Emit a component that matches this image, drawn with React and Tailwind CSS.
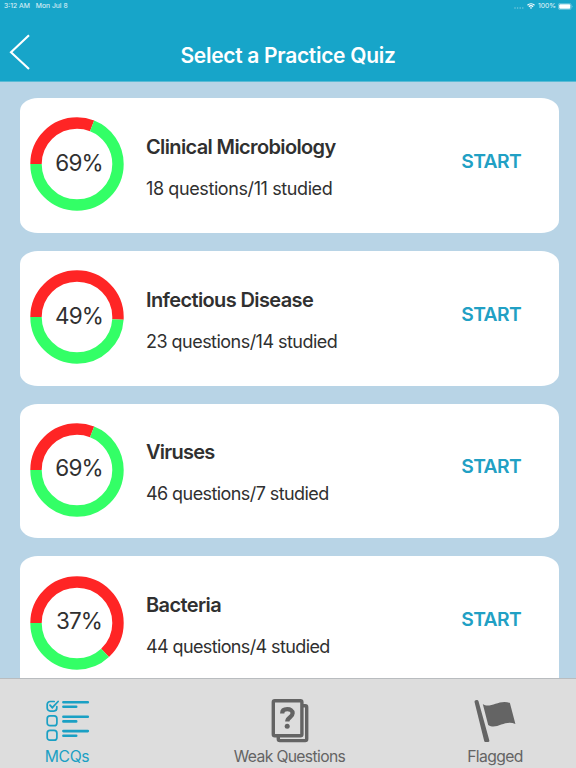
import { clsx } from "clsx";

const quizzes = [
  { title: "Clinical Microbiology", questions: 18, studied: 11, percent: 69, titleStyle: "tracking-[-0.63px]", infoStyle: "tracking-[-0.4px]" },
  { title: "Infectious Disease", questions: 23, studied: 14, percent: 49, titleStyle: "tracking-[-0.62px]", infoStyle: "tracking-[-0.53px]" },
  { title: "Viruses", questions: 46, studied: 7, percent: 69, titleStyle: "tracking-[-0.75px]", infoStyle: "tracking-[-0.58px]" },
  { title: "Bacteria", questions: 44, studied: 4, percent: 37, titleStyle: "tracking-[-0.6px]", infoStyle: "tracking-[-0.62px]" },
];

function StatusBar() {
  return (
    <div className="flex h-3 items-center justify-between pl-1 pr-[3px] text-[6.8px] leading-3 text-white/90">
      <div className="flex gap-[6px]">
        <span>3:12 AM</span>
        <span>Mon Jul 8</span>
      </div>
      <div className="flex items-center">
        <svg className="mr-[3px] mt-[3px]" width="10" height="2" viewBox="0 0 10 2" fill="#fff" opacity="0.4">
          <circle cx="1" cy="1" r="0.8" />
          <circle cx="3.6" cy="1" r="0.8" />
          <circle cx="6.2" cy="1" r="0.8" />
          <circle cx="8.8" cy="1" r="0.8" />
        </svg>
        <svg className="mr-[3px]" width="8" height="6" viewBox="0 0 8 6" fill="none" stroke="#fff" strokeWidth="1.2">
          <path d="M0.5 2.2a5 5 0 0 1 7 0" />
          <path d="M1.9 3.7a3 3 0 0 1 4.2 0" />
          <path d="M4 6 L2.9 4.8a1.6 1.6 0 0 1 2.2 0Z" fill="#fff" stroke="none" />
        </svg>
        <span className="mr-[2px]">100%</span>
        <svg width="15" height="7" viewBox="0 0 15 7">
          <rect x="0.4" y="0.4" width="12.7" height="6.2" rx="1.6" fill="none" stroke="#fff" strokeOpacity="0.45" strokeWidth="0.7" />
          <rect x="1.2" y="1.2" width="11.1" height="4.6" rx="1" fill="#fff" />
          <path d="M13.9 2.4v2.2a1.3 1.3 0 0 0 0-2.2Z" fill="#fff" opacity="0.5" />
        </svg>
      </div>
    </div>
  );
}

function Header() {
  return (
    <header className="h-[81.5px] shrink-0 border-b border-[#5abbd5] bg-[#17a5c9]">
      <StatusBar />
      <div className="grid h-[69px] grid-cols-[60px_1fr_60px] items-center">
        <svg className="ml-[9px] mt-[11px]" width="22" height="36" viewBox="0 0 22 36" fill="none" stroke="#fff" strokeWidth="2.1">
          <path d="M20 1.2 L2 18.3 L20 35" />
        </svg>
        <h1 className="mt-[18px] text-center text-[21px] font-semibold leading-6 tracking-[-0.3px] text-white">
          Select a Practice Quiz
        </h1>
      </div>
    </header>
  );
}

// Both arcs start at nine o'clock: green runs counter-clockwise, red fills the rest
function ScoreRing({ percent }) {
  return (
    <div className="mt-[-2px] grid size-[94px] shrink-0 place-items-center">
      <svg className="col-start-1 row-start-1" width="94" height="94" viewBox="0 0 94 94" fill="none" strokeWidth="11.4">
        <circle
          cx="47"
          cy="47"
          r="41"
          stroke="#ff2525"
          pathLength="100"
          strokeDasharray={`${100 - percent} 100`}
          transform="rotate(180 47 47)"
        />
        <circle
          cx="47"
          cy="47"
          r="41"
          stroke="#33ff66"
          pathLength="100"
          strokeDasharray={`${percent} 100`}
          transform="matrix(-1 0 0 1 94 0)"
        />
      </svg>
      <span className="col-start-1 row-start-1 ml-[4px] mt-[-3px] text-[22.5px] leading-7 tracking-[-0.9px] text-[#303030]">
        {percent}%
      </span>
    </div>
  );
}

function QuizCard({ quiz }) {
  return (
    <article className="flex h-[134.8px] shrink-0 items-center rounded-[18px_/_13px] bg-white pl-[10.5px] pr-[38px]">
      <ScoreRing percent={quiz.percent} />
      <div className="ml-[22px] mt-[5px] flex-1 text-[#303030]">
        <h2 className={clsx("text-[20px] font-semibold leading-6", quiz.titleStyle)}>{quiz.title}</h2>
        <p className={clsx("mt-[18px] text-[18px] leading-6", quiz.infoStyle)}>
          {quiz.questions} questions/{quiz.studied} studied
        </p>
      </div>
      <button className="mt-[-9px] text-[19.3px] font-semibold leading-6 tracking-[-0.65px] text-[#21a0c4]">
        START
      </button>
    </article>
  );
}

function ChecklistIcon() {
  return (
    <svg width="44" height="42" viewBox="0 0 44 42" fill="none" stroke="currentColor" strokeLinecap="round">
      <g strokeWidth="1.7">
        <path d="M10.8 6.5v1.6a3 3 0 0 1-3 3H4.2a3 3 0 0 1-3-3V4.5a3 3 0 0 1 3-3h4" />
        <path d="M4 5.2l2.3 2.4 5.8-6.1" strokeWidth="1.8" />
        <rect x="1.2" y="15.9" width="9.7" height="9.8" rx="2.8" />
        <rect x="1.2" y="30.4" width="9.7" height="9.8" rx="2.8" />
      </g>
      <g strokeWidth="2.6">
        <path d="M17.4 2.2h24.4M17.4 6.8h12.8" />
        <path d="M17.4 16.7h24.4M17.4 21.4h12.8" />
        <path d="M17.4 31.1h24.4M17.4 35.8h12.8" />
      </g>
    </svg>
  );
}

function QuestionCardsIcon() {
  return (
    <svg width="38" height="44" viewBox="0 0 38 44" fill="none" stroke="currentColor" strokeWidth="3.4" strokeLinejoin="round">
      <rect x="2.3" y="1.8" width="28.6" height="35" rx="1.5" />
      <path d="M31 6.8h3.2a1.5 1.5 0 0 1 1.5 1.5v31.8a1.5 1.5 0 0 1-1.5 1.5H8.8a1.5 1.5 0 0 1-1.5-1.5V37" />
      <path d="M11.2 14.4c0-3 2.2-4.2 5.1-4.2s5.3 1.3 5.3 4.1c0 4.1-5.3 3.7-5.3 8.200" strokeWidth="4.3" />
      <circle cx="16.2" cy="27.300" r="2.500" fill="currentColor" stroke="none" />
    </svg>
  );
}

function FlagIcon() {
  return (
    <svg width="43" height="44" viewBox="0 0 43 44" fill="currentColor">
      <path d="M0.6 3.2C0 .8 4 .2 4.6 2.5L15.3 41.3c.3 1-.2 1.7-1.1 1.7h-2.6c-.8 0-1.2-.4-1.4-1.1Z" />
      <path d="M8.8 5C16 10.5 25.5-.5 35.9 4L41.4 25C30.7 20.3 22.5 31.5 14.2 26Z" />
    </svg>
  );
}

function TabBar() {
  return (
    <nav className="flex h-[90.5px] shrink-0 border-t border-[#b9bcbf] bg-[#dddddd] text-[15.7px] leading-5 text-[#646464]">
      <button className="flex w-[134px] flex-col items-center pl-[1px] pt-[21px] text-[#1aa0c4]">
        <ChecklistIcon />
        <span className="mt-[5px] mr-[1px] tracking-[-0.35px]">MCQs</span>
      </button>
      <button className="flex w-[312px] flex-col items-center pt-[20px]">
        <QuestionCardsIcon />
        <span className="mt-[4px] mr-[1px] tracking-[-0.65px]">Weak Questions</span>
      </button>
      <button className="flex w-[98px] flex-col items-center pt-[20px]">
        <FlagIcon />
        <span className="mt-[4px] tracking-[-0.6px]">Flagged</span>
      </button>
    </nav>
  );
}

export default function App() {
  return (
    <div className="flex h-[768px] w-[576px] flex-col overflow-hidden bg-[#b8d4e6] font-[Inter,'Liberation_Sans',sans-serif]">
      <Header />
      <main className="flex min-h-0 flex-1 flex-col gap-[18px] overflow-hidden pl-[19.5px] pr-[17px] pt-[16.5px]">
        {quizzes.map((quiz) => (
          <QuizCard key={quiz.title} quiz={quiz} />
        ))}
      </main>
      <TabBar />
    </div>
  );
}
